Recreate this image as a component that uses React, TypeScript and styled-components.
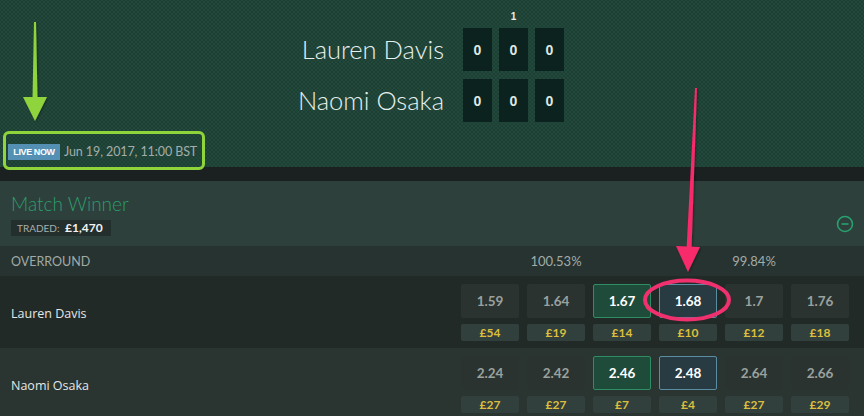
import React from "react";
import styled, { createGlobalStyle } from "styled-components";

const GlobalStyle = createGlobalStyle`
  body {
    margin: 0;
    background: #1b2120;
    font-family: Lato, "Open Sans", sans-serif;
  }
`;

const runners = [
  {
    name: "Lauren Davis",
    odds: ["1.59", "1.64", "1.67", "1.68", "1.7", "1.76"],
    stakes: ["£54", "£19", "£14", "£10", "£12", "£18"],
    bg: "#222a28",
  },
  {
    name: "Naomi Osaka",
    odds: ["2.24", "2.42", "2.46", "2.48", "2.64", "2.66"],
    stakes: ["£27", "£27", "£7", "£4", "£27", "£29"],
    bg: "#2a3431",
  },
];

function App() {
  return (
    <Page>
      <GlobalStyle />
      <Header>
        <ScoreGrid>
          <span />
          <span />
          <SetLabel>1</SetLabel>
          <span />
          {runners.map((r) => (
            <React.Fragment key={r.name}>
              <PlayerName>{r.name}</PlayerName>
              <ScoreBox>0</ScoreBox>
              <ScoreBox>0</ScoreBox>
              <ScoreBox>0</ScoreBox>
            </React.Fragment>
          ))}
        </ScoreGrid>
        <LiveOutline>
          <LiveBadge>LIVE NOW</LiveBadge>
          <DateText>Jun 19, 2017, 11:00 BST</DateText>
        </LiveOutline>
      </Header>
      <Strip />
      <MarketHead>
        <div>
          <MarketTitle>Match Winner</MarketTitle>
          <Traded>
            TRADED: <strong>£1,470</strong>
          </Traded>
        </div>
        <svg width="18" height="18" viewBox="0 0 18 18">
          <circle cx="9" cy="9" r="7.5" fill="none" stroke="#27a170" strokeWidth="1.6" />
          <line x1="5.5" y1="9" x2="12.5" y2="9" stroke="#27a170" strokeWidth="1.6" />
        </svg>
      </MarketHead>
      <OverroundRow>
        <RowLabel>Overround</RowLabel>
        <Prices>
          <Percent>100.53%</Percent>
          <Percent>99.84%</Percent>
        </Prices>
      </OverroundRow>
      {runners.map((r) => (
        <RunnerRow key={r.name} $bg={r.bg}>
          <RunnerName>{r.name}</RunnerName>
          <Prices>
            {r.odds.map((o, i) => (
              <PriceCell key={i}>
                <Odds $kind={i === 2 ? "back" : i === 3 ? "lay" : "none"}>{o}</Odds>
                <Stake>{r.stakes[i]}</Stake>
              </PriceCell>
            ))}
          </Prices>
        </RunnerRow>
      ))}
      <Annotations width="864" height="416" viewBox="0 0 864 416">
        <defs>
          <filter id="sh" x="-20%" y="-20%" width="140%" height="140%">
            <feDropShadow dx="1" dy="1" stdDeviation="1" floodColor="#000" floodOpacity="0.35" />
          </filter>
        </defs>
        <g filter="url(#sh)">
          <polygon points="34,22 36,22 37.5,99 32.5,99" fill="#8fd43c" />
          <polygon points="23,97 47,97 35,121" fill="#8fd43c" />
          <polygon points="695,88 697,88 691.5,250 686.5,250" fill="#f72a6c" />
          <polygon points="676,246 700,247 688,272" fill="#f72a6c" />
        </g>
        <ellipse cx="687" cy="300" rx="42" ry="19.5" fill="none" stroke="#f0306f" strokeWidth="4" />
      </Annotations>
    </Page>
  );
}

export default App;

const Page = styled.div`
  position: relative;
  width: 864px;
  height: 416px;
  overflow: hidden;
  background: #1b2120;
`;

const Header = styled.div`
  height: 167px;
  box-sizing: border-box;
  padding-top: 8px;
  display: flex;
  flex-direction: column;
  background-color: #23493c;
  background-image: radial-gradient(circle, rgba(18, 44, 36, 0.35) 0.9px, transparent 1.5px),
    radial-gradient(circle, rgba(18, 44, 36, 0.35) 0.9px, transparent 1.5px);
  background-size: 4px 4px;
  background-position: 0 0, 2px 2px;
`;

const ScoreGrid = styled.div`
  display: grid;
  grid-template-columns: 456px 29px 29px 29px;
  grid-template-rows: 20px 43px 51px;
  column-gap: 7px;
  & > :nth-child(n + 9) {
    margin-top: 8px;
  }
`;

const SetLabel = styled.div`
  color: #e8eeec;
  font: bold 10px "Liberation Sans", Arial, sans-serif;
  text-align: center;
  padding-top: 3px;
`;

const PlayerName = styled.div`
  color: #e6f0ee;
  font-size: 25.5px;
  font-weight: 300;
  text-align: right;
  padding-right: 12px;
  line-height: 43px;
`;

const ScoreBox = styled.div`
  background: #0c221e;
  color: #dfe8e4;
  font: bold 14px "Liberation Sans", Arial, sans-serif;
  display: flex;
  align-items: center;
  justify-content: center;
`;

const LiveOutline = styled.div`
  margin-top: auto;
  margin-left: 3px;
  margin-bottom: -3px;
  align-self: flex-start;
  display: flex;
  align-items: center;
  gap: 4px;
  height: 39px;
  box-sizing: border-box;
  padding: 2px 5px 0 2px;
  border: 3px solid #8ed43a;
  border-radius: 6px;
  position: relative;
  z-index: 1;
`;

const LiveBadge = styled.span`
  background: #5390b4;
  color: #fff;
  font: bold 9px "Liberation Sans", Arial, sans-serif;
  letter-spacing: -0.4px;
  height: 16px;
  width: 52px;
  display: flex;
  align-items: center;
  justify-content: center;
`;

const DateText = styled.span`
  color: #a3adaa;
  font-size: 12.5px;
  letter-spacing: -0.1px;
`;

const Strip = styled.div`
  height: 14px;
  background: #1b2120;
`;

const MarketHead = styled.div`
  height: 65px;
  box-sizing: border-box;
  background: #2e403b;
  padding: 11px 10px 0 11px;
  display: flex;
  justify-content: space-between;
  align-items: flex-start;
  & > svg {
    margin-top: 23px;
  }
`;

const MarketTitle = styled.div`
  color: #2a9e6d;
  font-size: 19px;
  font-weight: 300;
  line-height: 24px;
`;

const Traded = styled.div`
  margin-top: 1px;
  display: inline-block;
  background: #232f2d;
  color: #a7b0ad;
  font-size: 10px;
  padding: 0 8px 0 6px;
  line-height: 16px;
  & strong {
    color: #f2f4f3;
    font-size: 12px;
    margin-left: 3px;
  }
`;

const OverroundRow = styled.div`
  height: 30px;
  background: #263330;
  display: flex;
  align-items: center;
`;

const RowLabel = styled.div`
  flex: 1;
  padding-left: 11px;
  color: #a2aaa7;
  font-size: 12.5px;
  text-transform: uppercase;
`;

const Prices = styled.div`
  display: grid;
  grid-template-columns: repeat(6, 58px);
  column-gap: 8px;
  padding-right: 15px;
`;

const Percent = styled.div`
  grid-column: span 3;
  text-align: center;
  color: #a3aba8;
  font-size: 13px;
`;

const RunnerRow = styled.div<{ $bg: string }>`
  height: 72px;
  flex-shrink: 0;
  box-sizing: border-box;
  padding-top: 8px;
  background: ${(p) => p.$bg};
  display: flex;
  align-items: flex-start;
`;

const RunnerName = styled.div`
  flex: 1;
  padding-left: 11px;
  margin-top: 21px;
  color: #e4e8e6;
  font-family: "Open Sans", sans-serif;
  font-size: 12.5px;
  font-weight: 500;
`;

const PriceCell = styled.div`
  display: flex;
  flex-direction: column;
  gap: 6px;
`;

const Odds = styled.div<{ $kind: "back" | "lay" | "none" }>`
  height: 34px;
  box-sizing: border-box;
  border-radius: 2px;
  display: flex;
  align-items: center;
  justify-content: center;
  font-size: 13.5px;
  font-weight: 700;
  color: ${(p) => (p.$kind === "none" ? "#9aa19e" : "#ffffff")};
  background: ${(p) =>
    p.$kind === "back" ? "#1f4b3b" : p.$kind === "lay" ? "#283b43" : "#2a3330"};
  border: 1px solid
    ${(p) => (p.$kind === "back" ? "#2f8d63" : p.$kind === "lay" ? "#5a8ca3" : "transparent")};
`;

const Stake = styled.div`
  height: 17px;
  border-radius: 2px;
  background: #31403c;
  color: #dcbf3c;
  font-size: 12px;
  font-weight: 700;
  display: flex;
  align-items: center;
  justify-content: center;
`;

const Annotations = styled.svg`
  position: absolute;
  left: 0;
  top: 0;
  pointer-events: none;
  z-index: 2;
`;
